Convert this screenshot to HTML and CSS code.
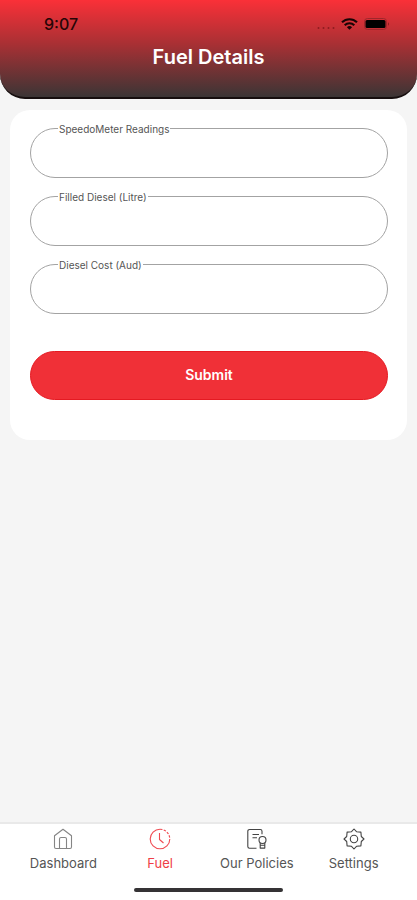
FILE: index.html
```html
<!DOCTYPE html>
<html lang="en">
<head>
<meta charset="utf-8">
<meta name="viewport" content="width=device-width, initial-scale=1">
<title>Fuel Details</title>
<link rel="stylesheet" href="styles.css">
</head>
<body>
<header class="header">
  <div class="status">
    <span class="time">9:07</span>
    <div class="indicators">
      <svg class="signal" width="18" height="12" viewBox="0 0 18 12" aria-hidden="true"><g fill="#8f1c20"><circle cx="1.5" cy="10" r="1"/><circle cx="6.500" cy="10" r="1"/><circle cx="11.500" cy="10" r="1"/><circle cx="16.500" cy="10" r="1"/></g></svg>
      <svg class="wifi" width="17" height="12" viewBox="0 0 17 12" aria-hidden="true"><g fill="none" stroke="#180405" stroke-width="2.1"><path d="M1 4.3a10.7 10.7 0 0 1 15 0"/><path d="M3.7 7.2a6.8 6.8 0 0 1 9.6 0"/></g><path d="M5.9 9.2a3.7 3.7 0 0 1 5.2 0L8.500 11.800z" fill="#180405"/></svg>
      <svg class="battery" width="26" height="12" viewBox="0 0 26 12" aria-hidden="true"><rect x=".5" y=".5" width="22" height="11" rx="3" fill="none" stroke="#9f262b"/><rect x="1.500" y="2" width="20" height="8" rx="1.500" fill="#000"/><path d="M24 4q1.600 2 0 4z" fill="#701619"/></svg>
    </div>
  </div>
  <h1 class="title">Fuel Details</h1>
</header>
<main class="content">
  <form class="card">
    <div class="field">
      <label class="field-label" for="speedo">SpeedoMeter Readings</label>
      <input class="field-input" id="speedo" type="text">
    </div>
    <div class="field">
      <label class="field-label" for="litre">Filled Diesel (Litre)</label>
      <input class="field-input" id="litre" type="text">
    </div>
    <div class="field">
      <label class="field-label" for="cost">Diesel Cost (Aud)</label>
      <input class="field-input" id="cost" type="text">
    </div>
    <button class="submit" type="button">Submit</button>
  </form>
</main>
<footer class="footer">
  <nav class="tabs">
    <a class="tab" href="#dashboard">
      <svg class="icon" viewBox="0 0 22 22" aria-hidden="true"><path d="M2.500 7.700 11 1.200l8.500 6.500V19a1.500 1.500 0 0 1-1.500 1.500H4A1.500 1.500 0 0 1 2.500 19z"/><path d="M7.500 20.500V11a1.500 1.500 0 0 1 1.500-1.500h4a1.500 1.500 0 0 1 1.500 1.500v9.500"/></svg>
      <span>Dashboard</span>
    </a>
    <a class="tab active" href="#fuel">
      <svg class="icon" viewBox="0 0 22 22" aria-hidden="true"><path d="M11 1.200a9.800 9.800 0 1 0 9.800 9.800"/><path d="M11 1.200a9.800 9.800 0 0 1 9.800 9.800" stroke-dasharray="2.500 1.300"/><path d="M10.500 5v6.500l4 3.500"/></svg>
      <span>Fuel</span>
    </a>
    <a class="tab dark" href="#policies">
      <svg class="icon" viewBox="0 0 22 22" aria-hidden="true"><path d="M10.500 20.300H3.500A1.700 1.700 0 0 1 1.800 18.600V3.200A1.700 1.700 0 0 1 3.500 1.500h10.800A1.700 1.700 0 0 1 16 3.200v3M6.500 6.500H13M6.500 9.700H11"/><circle cx="16.500" cy="12" r="3.500"/><path d="M14.200 14.800v5.300h4.600v-5.300M14.200 17.200h4.600"/></svg>
      <span>Our Policies</span>
    </a>
    <a class="tab dark" href="#settings">
      <svg class="icon" viewBox="0 0 22 22" aria-hidden="true"><path d="M11 1 13.500 3.700 17.900 4.100 18.300 8.500 21 11 18.300 13.500 17.900 17.900 13.500 18.300 11 21 8.500 18.300 4.100 17.900 3.700 13.500 1 11 3.700 8.500 4.100 4.100 8.500 3.700z"/><circle cx="11" cy="11" r="3.700"/></svg>
      <span>Settings</span>
    </a>
  </nav>
  <div class="home-bar"></div>
</footer>
</body>
</html>
```
FILE: styles.css
```css
* {
  box-sizing: border-box;
}

body {
  margin: 0;
  min-height: 100vh;
  display: flex;
  flex-direction: column;
  background: #f5f5f5;
  color: #555;
  font-family: Inter, "Liberation Sans", sans-serif;
}

.header {
  height: 99px;
  padding-top: 14px;
  border-bottom: 2px solid #160e0e;
  border-radius: 0 0 25px 25px;
  background: linear-gradient(#fa3038, #a93034 45%, #3b3535);
}

.status {
  display: flex;
  justify-content: space-between;
  align-items: center;
  height: 20px;
  padding: 0 27px 0 44px;
}

.time {
  color: #260506;
  font-size: 16px;
  font-weight: 500;
}

.indicators {
  display: flex;
  align-items: center;
  gap: 6px;
}

.title {
  margin: 11px 0 0;
  color: #fff;
  font-size: 20px;
  line-height: 24px;
  font-weight: 600;
  text-align: center;
}

.content {
  flex: 1;
  padding: 11px 10px;
}

.card {
  padding: 18px 19px 40px 20px;
  border-radius: 20px;
  background: #fff;
}

.field {
  position: relative;
  margin-bottom: 18px;
}

.field-label {
  position: absolute;
  top: -5px;
  left: 28px;
  padding: 0 1px;
  background: #fff;
  font-size: 10px;
  line-height: 12px;
}

.field-input {
  display: block;
  width: 100%;
  height: 50px;
  padding: 0 28px;
  border: 1px solid #a3a3a3;
  border-radius: 25px;
  background: #fff;
  font: inherit;
}

.submit {
  display: block;
  width: 100%;
  height: 49px;
  margin-top: 37px;
  padding: 0 0 2px;
  border: 1px solid #e51a22;
  border-radius: 25px;
  background: #f03037;
  color: #fff;
  font: 600 14px Inter, "Liberation Sans", sans-serif;
}

.footer {
  padding: 4px 15px 8px;
  border-top: 2px solid #e9e9e9;
  background: #fff;
}

.tabs {
  display: grid;
  grid-template-columns: repeat(4, 1fr);
}

.tab {
  display: flex;
  flex-direction: column;
  align-items: center;
  gap: 4px;
  color: #555;
  font-size: 13px;
  line-height: 18px;
  text-decoration: none;
  white-space: nowrap;
}

.tab.active {
  color: #ef3e46;
}

.icon {
  width: 22px;
  height: 22px;
  fill: none;
  stroke: #858585;
  stroke-width: 1.1;
  stroke-linejoin: round;
}

.active .icon {
  stroke: #ef4a51;
}

.dark .icon {
  stroke: #444;
}

.home-bar {
  width: 149px;
  height: 4px;
  margin: 16px auto 0;
  border-radius: 2px;
  background: #353335;
}
```
